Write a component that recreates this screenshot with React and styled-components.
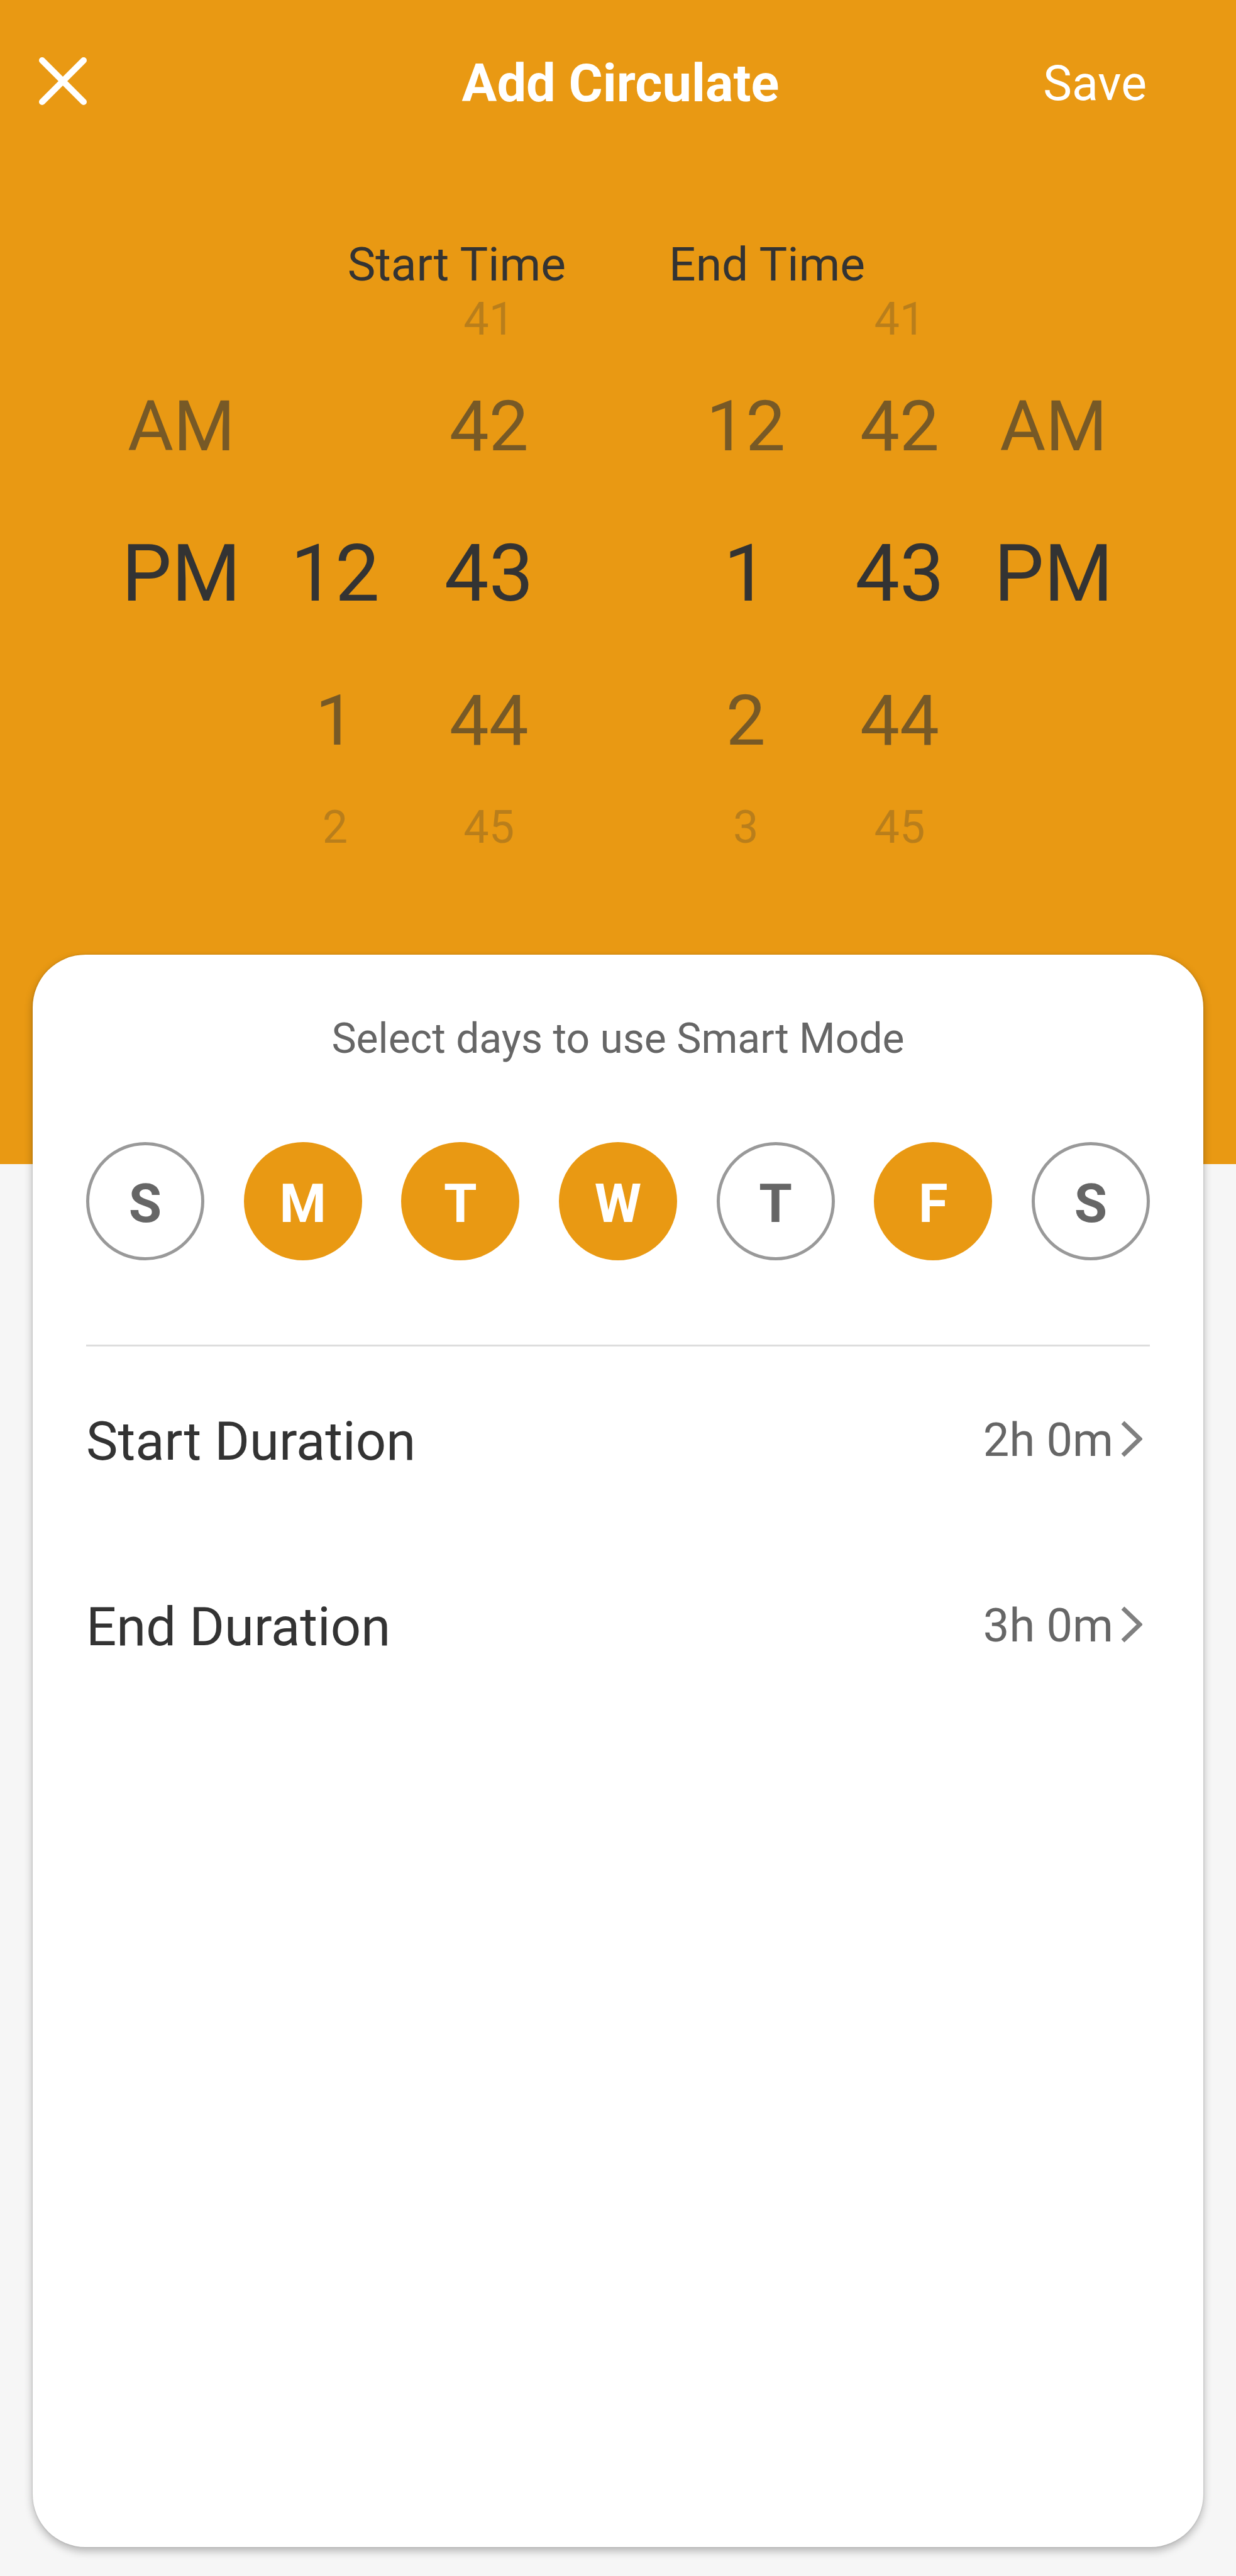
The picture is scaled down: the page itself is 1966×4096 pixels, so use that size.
import { useState } from "react";
import styled, { createGlobalStyle } from "styled-components";

const HOURS = [12, 1, 2, 3, 4, 5, 6, 7, 8, 9, 10, 11];
const MINUTES = Array.from({ length: 60 }, (_, i) => String(i).padStart(2, "0"));
const PERIODS = ["AM", "PM"];
const DAYS = [
  { name: "Sunday", letter: "S" },
  { name: "Monday", letter: "M" },
  { name: "Tuesday", letter: "T" },
  { name: "Wednesday", letter: "W" },
  { name: "Thursday", letter: "T" },
  { name: "Friday", letter: "F" },
  { name: "Saturday", letter: "S" },
];

// one scrolling column, shows two options above and below the picked one
const Wheel = ({ label, options, start }) => {
  const [index, setIndex] = useState(start);

  return (
    <WheelColumn role="group" aria-label={label}>
      {[-2, -1, 0, 1, 2].map((step) => {
        const option = options[index + step];
        return (
          <WheelSlot key={step} $distance={Math.abs(step)}>
            {option !== undefined && (
              <WheelOption
                type="button"
                aria-pressed={step === 0}
                $distance={Math.abs(step)}
                onClick={() => setIndex(index + step)}
              >
                {option}
              </WheelOption>
            )}
          </WheelSlot>
        );
      })}
    </WheelColumn>
  );
};

const DurationRow = ({ label, value }) => (
  <Row type="button">
    <RowLabel>{label}</RowLabel>
    <RowValue>
      {value}
      <Chevron viewBox="0 0 34 62" aria-hidden="true">
        <path d="M3 3 L30 29 L3 55" />
      </Chevron>
    </RowValue>
  </Row>
);

const App = () => {
  const [picked, setPicked] = useState([1, 2, 3, 5]);

  const toggleDay = (day) => {
    setPicked(picked.includes(day) ? picked.filter((d) => d !== day) : [...picked, day]);
  };

  return (
    <>
      <GlobalStyle />
      <Page>
        <Hero>
          <Header>
            <CloseButton type="button" aria-label="Close">
              <CloseIcon viewBox="0 0 76 84" aria-hidden="true">
                <path d="M5 5 L71 71 M71 5 L5 71" />
              </CloseIcon>
            </CloseButton>
            <Title>Add Circulate</Title>
            <SaveButton type="button">Save</SaveButton>
          </Header>
          <Pickers>
            <Picker>
              <PickerLabel $align="right">Start Time</PickerLabel>
              <Wheels>
                <Wheel label="Start period" options={PERIODS} start={1} />
                <Wheel label="Start hour" options={HOURS} start={0} />
                <Wheel label="Start minute" options={MINUTES} start={43} />
              </Wheels>
            </Picker>
            <Picker>
              <PickerLabel $align="left">End Time</PickerLabel>
              <Wheels>
                <Wheel label="End hour" options={HOURS} start={1} />
                <Wheel label="End minute" options={MINUTES} start={43} />
                <Wheel label="End period" options={PERIODS} start={1} />
              </Wheels>
            </Picker>
          </Pickers>
        </Hero>
        <Card>
          <Hint>Select days to use Smart Mode</Hint>
          <Days>
            {DAYS.map((day, i) => (
              <DayButton
                key={day.name}
                type="button"
                aria-label={day.name}
                aria-pressed={picked.includes(i)}
                $active={picked.includes(i)}
                onClick={() => toggleDay(i)}
              >
                {day.letter}
              </DayButton>
            ))}
          </Days>
          <Divider />
          <DurationRow label="Start Duration" value="2h 0m" />
          <DurationRow label="End Duration" value="3h 0m" />
        </Card>
      </Page>
    </>
  );
};
export default App;

const GlobalStyle = createGlobalStyle`
* {
  box-sizing: border-box;
}

body {
  margin: 0;
  background: #f6f6f6;
  font-family: Roboto, "Liberation Sans", sans-serif;
  color: #333333;
}

button {
  margin: 0;
  padding: 0;
  border: none;
  background: none;
  font-family: inherit;
  color: inherit;
  cursor: pointer;
}
`;

const Page = styled.div`
  display: flex;
  flex-direction: column;
  min-height: 100vh;
`;

const Hero = styled.section`
  padding-bottom: 482px;
  background: #e99913;
`;

const Header = styled.header`
  display: grid;
  grid-template-columns: 1fr auto 1fr;
  align-items: center;
  height: 265px;
  padding: 0 54px 0 62px;
  color: #ffffff;
`;

const CloseButton = styled.button`
  display: flex;
  justify-self: start;
`;

const CloseIcon = styled.svg`
  width: 76px;
  height: 84px;
  fill: none;
  stroke: currentColor;
  stroke-width: 10;
  stroke-linecap: round;
`;

const Title = styled.h1`
  margin: 0;
  font-size: 83px;
  font-weight: 700;
`;

const SaveButton = styled.button`
  justify-self: end;
  margin-right: 88px;
  font-size: 77px;
`;

const Pickers = styled.div`
  display: grid;
  grid-template-columns: 1fr 1fr;
  gap: 164px;
  padding: 120px 168px 0 166px;
`;

const Picker = styled.div`
  display: flex;
  flex-direction: column;
`;

const PickerLabel = styled.h2`
  margin: 0;
  font-size: 75px;
  font-weight: 400;
  line-height: 70px;
  text-align: ${(props) => props.$align};
`;

const Wheels = styled.div`
  display: grid;
  grid-template-columns: repeat(3, 1fr);
`;

const WheelColumn = styled.div`
  display: flex;
  flex-direction: column;
`;

const WheelSlot = styled.div`
  display: flex;
  align-items: center;
  justify-content: center;
  height: ${(props) => (props.$distance === 2 ? 106 : 234)}px;
`;

const WheelOption = styled.button`
  font-size: ${(props) => [126, 112, 72][props.$distance]}px;
  line-height: 1;
  opacity: ${(props) => [1, 0.62, 0.26][props.$distance]};
`;

const Card = styled.main`
  display: flex;
  flex-direction: column;
  flex: 1;
  position: relative;
  margin: -333px 52px 46px;
  padding: 94px 85px;
  border-radius: 84px;
  background: #ffffff;
  box-shadow: 0 6px 14px rgba(0, 0, 0, 0.28), 0 0 3px rgba(0, 0, 0, 0.15);
`;

const Hint = styled.p`
  margin: 0 0 124px;
  font-size: 66px;
  line-height: 80px;
  text-align: center;
  color: #666666;
`;

const Days = styled.div`
  display: flex;
  justify-content: space-between;
`;

const DayButton = styled.button`
  width: 188px;
  height: 188px;
  padding-top: 8px;
  border: 5px solid ${(props) => (props.$active ? "#e99913" : "#999999")};
  border-radius: 50%;
  background: ${(props) => (props.$active ? "#e99913" : "#ffffff")};
  font-size: 85px;
  font-weight: 700;
  color: ${(props) => (props.$active ? "#ffffff" : "#666666")};
`;

const Divider = styled.hr`
  width: 100%;
  height: 3px;
  margin: 134px 0 3px;
  border: none;
  background: #dddddd;
`;

const Row = styled.button`
  display: flex;
  align-items: center;
  justify-content: space-between;
  height: 295px;
  padding-right: 12px;
`;

const RowLabel = styled.span`
  font-size: 85px;
`;

const RowValue = styled.span`
  display: flex;
  align-items: center;
  gap: 12px;
  padding-bottom: 4px;
  font-size: 74px;
  color: #666666;
`;

const Chevron = styled.svg`
  width: 34px;
  height: 62px;
  fill: none;
  stroke: #808080;
  stroke-width: 7;
`;
